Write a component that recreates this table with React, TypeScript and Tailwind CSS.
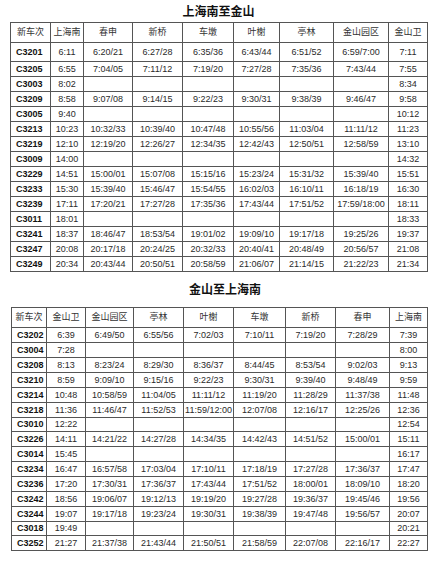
import React from "react";

type Row = [string, ...string[]];

const southHeads = ["新车次", "上海南", "春申", "新桥", "车墩", "叶榭", "亭林", "金山园区", "金山卫"];
const southCols = ["w-[40px]", "w-[33px]", "w-[49px]", "w-[50px]", "w-[51px]", "w-[46px]", "w-[54px]", "w-[55px]", "w-[39px]"];
const southRows: Row[] = [
  ["C3201", "6:11", "6:20/21", "6:27/28", "6:35/36", "6:43/44", "6:51/52", "6:59/7:00", "7:11"],
  ["C3205", "6:55", "7:04/05", "7:11/12", "7:19/20", "7:27/28", "7:35/36", "7:43/44", "7:55"],
  ["C3003", "8:02", "", "", "", "", "", "", "8:34"],
  ["C3209", "8:58", "9:07/08", "9:14/15", "9:22/23", "9:30/31", "9:38/39", "9:46/47", "9:58"],
  ["C3005", "9:40", "", "", "", "", "", "", "10:12"],
  ["C3213", "10:23", "10:32/33", "10:39/40", "10:47/48", "10:55/56", "11:03/04", "11:11/12", "11:23"],
  ["C3219", "12:10", "12:19/20", "12:26/27", "12:34/35", "12:42/43", "12:50/51", "12:58/59", "13:10"],
  ["C3009", "14:00", "", "", "", "", "", "", "14:32"],
  ["C3229", "14:51", "15:00/01", "15:07/08", "15:15/16", "15:23/24", "15:31/32", "15:39/40", "15:51"],
  ["C3233", "15:30", "15:39/40", "15:46/47", "15:54/55", "16:02/03", "16:10/11", "16:18/19", "16:30"],
  ["C3239", "17:11", "17:20/21", "17:27/28", "17:35/36", "17:43/44", "17:51/52", "17:59/18:00", "18:11"],
  ["C3011", "18:01", "", "", "", "", "", "", "18:33"],
  ["C3241", "18:37", "18:46/47", "18:53/54", "19:01/02", "19:09/10", "19:17/18", "19:25/26", "19:37"],
  ["C3247", "20:08", "20:17/18", "20:24/25", "20:32/33", "20:40/41", "20:48/49", "20:56/57", "21:08"],
  ["C3249", "20:34", "20:43/44", "20:50/51", "20:58/59", "21:06/07", "21:14/15", "21:22/23", "21:34"],
];

const northHeads = ["新车次", "金山卫", "金山园区", "亭林", "叶榭", "车墩", "新桥", "春申", "上海南"];
const northCols = ["w-[35px]", "w-[39px]", "w-[48px]", "w-[50px]", "w-[50px]", "w-[52px]", "w-[50px]", "w-[54px]", "w-[38px]"];
const northRows: Row[] = [
  ["C3202", "6:39", "6:49/50", "6:55/56", "7:02/03", "7:10/11", "7:19/20", "7:28/29", "7:39"],
  ["C3004", "7:28", "", "", "", "", "", "", "8:00"],
  ["C3208", "8:13", "8:23/24", "8:29/30", "8:36/37", "8:44/45", "8:53/54", "9:02/03", "9:13"],
  ["C3210", "8:59", "9:09/10", "9:15/16", "9:22/23", "9:30/31", "9:39/40", "9:48/49", "9:59"],
  ["C3214", "10:48", "10:58/59", "11:04/05", "11:11/12", "11:19/20", "11:28/29", "11:37/38", "11:48"],
  ["C3218", "11:36", "11:46/47", "11:52/53", "11:59/12:00", "12:07/08", "12:16/17", "12:25/26", "12:36"],
  ["C3010", "12:22", "", "", "", "", "", "", "12:54"],
  ["C3226", "14:11", "14:21/22", "14:27/28", "14:34/35", "14:42/43", "14:51/52", "15:00/01", "15:11"],
  ["C3014", "15:45", "", "", "", "", "", "", "16:17"],
  ["C3234", "16:47", "16:57/58", "17:03/04", "17:10/11", "17:18/19", "17:27/28", "17:36/37", "17:47"],
  ["C3236", "17:20", "17:30/31", "17:36/37", "17:43/44", "17:51/52", "18:00/01", "18:09/10", "18:20"],
  ["C3242", "18:56", "19:06/07", "19:12/13", "19:19/20", "19:27/28", "19:36/37", "19:45/46", "19:56"],
  ["C3244", "19:07", "19:17/18", "19:23/24", "19:30/31", "19:38/39", "19:47/48", "19:56/57", "20:07"],
  ["C3018", "19:49", "", "", "", "", "", "", "20:21"],
  ["C3252", "21:27", "21:37/38", "21:43/44", "21:50/51", "21:58/59", "22:07/08", "22:16/17", "22:27"],
];

// row heights picked to follow the scan, which drifts by a pixel here and there
const southHeights = ["h-[19px]", "h-[15px]", "h-[15px]", "h-[15px]", "h-[15px]", "h-[15px]", "h-[15px]", "h-[15px]", "h-[15px]", "h-[15px]", "h-[15px]", "h-[15px]", "h-[15px]", "h-[15px]", "h-[15px]"];
const northHeights = ["h-[15px]", "h-[15px]", "h-[15px]", "h-[15px]", "h-[15px]", "h-[15px]", "h-[14px]", "h-[15px]", "h-[15px]", "h-[15px]", "h-[15px]", "h-[15px]", "h-[15px]", "h-[14px]", "h-[15px]"];

function Timetable({ heads, cols, rows, heights }: { heads: string[]; cols: string[]; rows: Row[]; heights: string[] }) {
  return (
    <table className="table-fixed border-collapse border border-[#3a3a3a] text-[9px] leading-none text-[#2a2a2a]">
      <colgroup>
        {cols.map((c, i) => (
          <col key={i} className={c} />
        ))}
      </colgroup>
      <thead>
        <tr className="h-[20px]">
          {heads.map((h) => (
            <th key={h} className="border border-[#555] font-normal text-center text-[#333] whitespace-nowrap p-0">
              {h}
            </th>
          ))}
        </tr>
      </thead>
      <tbody>
        {rows.map((r, i) => (
          <tr key={r[0]} className={heights[i]}>
            {r.map((v, j) => (
              <td
                key={j}
                className={
                  j === 0
                    ? "border border-[#555] font-bold text-left pl-[5px] p-0 whitespace-nowrap text-[#111]"
                    : "border border-[#555] text-center p-0 whitespace-nowrap"
                }
              >
                {v}
              </td>
            ))}
          </tr>
        ))}
      </tbody>
    </table>
  );
}

export default function App() {
  return (
    <div
      className="w-[440px] h-[561px] bg-white overflow-hidden"
      style={{ fontFamily: '"Liberation Sans", "Noto Sans CJK SC", sans-serif' }}
    >
      <div className="pl-[10px]">
        <div className="h-[22px] w-[417px] flex items-center justify-center pt-[2px] text-[12px] font-bold text-[#111]">
          上海南至金山
        </div>
        <Timetable heads={southHeads} cols={southCols} rows={southRows} heights={southHeights} />
      </div>
      <div className="pl-[11px]">
        <div className="h-[35px] w-[416px] flex items-center justify-center pl-[12px] text-[12px] font-bold text-[#111]">
          金山至上海南
        </div>
        <Timetable heads={northHeads} cols={northCols} rows={northRows} heights={northHeights} />
      </div>
    </div>
  );
}
